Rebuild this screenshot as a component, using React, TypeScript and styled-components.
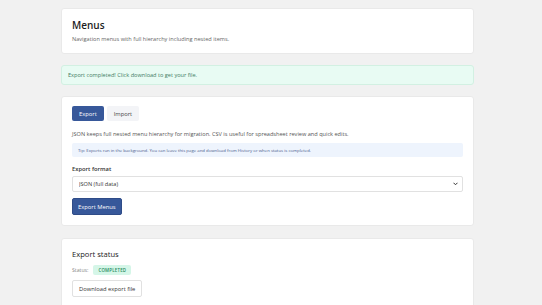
import styled, { createGlobalStyle } from 'styled-components';

const GlobalStyle = createGlobalStyle`
  html, body {
    margin: 0;
    padding: 0;
    background: #f1f1f1;
    font-family: "Open Sans", "Noto Sans", sans-serif;
    color: #222;
  }
`;

const Page = styled.div`
  width: 413px;
  margin: 8px 0 0 61px;
  display: flex;
  flex-direction: column;
  gap: 11px;
`;

const Card = styled.section<{ $extraTop?: number }>`
  background: #fff;
  border: 1px solid #e9e9e9;
  border-radius: 3px;
  padding: 9px 10px 10px;
  margin-top: ${p => p.$extraTop ?? 0}px;
  display: flex;
  flex-direction: column;
`;

const Title = styled.h1`
  margin: 0;
  font-size: 10px;
  font-weight: 600;
  color: #1e1e1e;
  line-height: 14px;
`;

const Subtitle = styled.p`
  margin: 3px 0 0;
  font-size: 5.6px;
  color: #666;
  line-height: 8px;
`;

const Alert = styled.div`
  background: #e8fbf3;
  border: 1px solid #d2f0e2;
  border-radius: 3px;
  padding: 5px 6px;
  font-size: 5.6px;
  line-height: 8px;
  color: #3f7c63;
`;

const Tabs = styled.div`
  display: flex;
  gap: 3px;
`;

const Tab = styled.button<{ $active?: boolean }>`
  font-family: inherit;
  font-size: 5.8px;
  height: 15px;
  padding: 0 7px;
  border-radius: 2px;
  border: none;
  cursor: pointer;
  background: ${p => (p.$active ? '#37589a' : '#f3f4f7')};
  color: ${p => (p.$active ? '#fff' : '#444')};
`;

const Text = styled.p`
  margin: 9px 0 0;
  font-size: 5.6px;
  line-height: 8px;
  color: #555;
`;

const Tip = styled.div`
  margin-top: 5px;
  background: #eef4fd;
  border-radius: 2px;
  padding: 3px 6px;
  font-size: 4.3px;
  line-height: 8px;
  color: #4a5b8c;
`;

const Label = styled.label`
  margin-top: 8px;
  font-size: 5.8px;
  font-weight: 600;
  color: #333;
  line-height: 8px;
`;

const SelectWrap = styled.div`
  position: relative;
  margin-top: 3px;
  display: flex;
`;

const Select = styled.select`
  flex: 1;
  appearance: none;
  height: 16px;
  font-family: inherit;
  font-size: 5.6px;
  color: #333;
  padding: 0 6px;
  border: 1px solid #e1e1e1;
  border-radius: 2px;
  background: #fff;
  outline: none;
`;

const Chevron = styled.svg`
  position: absolute;
  right: 5px;
  top: 6px;
  width: 5px;
  height: 4px;
  pointer-events: none;
`;

const Primary = styled.button`
  margin-top: 6px;
  align-self: flex-start;
  height: 17px;
  padding: 0 5px;
  font-family: inherit;
  font-size: 5.8px;
  color: #fff;
  background: #37589a;
  border: 1px solid #2f4c88;
  border-radius: 2px;
`;

const SectionTitle = styled.h2`
  margin: 0;
  font-size: 7.6px;
  font-weight: 500;
  color: #222;
  line-height: 12px;
`;

const StatusRow = styled.div`
  margin-top: 5px;
  display: flex;
  align-items: center;
  gap: 5px;
  font-size: 5.2px;
  color: #888;
`;

const Badge = styled.span`
  background: #d5f6e8;
  color: #1f8a5c;
  font-size: 4.4px;
  font-weight: 600;
  letter-spacing: 0.2px;
  padding: 2px 5px;
  border-radius: 2px;
`;

const Secondary = styled.button`
  margin-top: 5px;
  align-self: flex-start;
  height: 17px;
  padding: 0 6px;
  font-family: inherit;
  font-size: 5.8px;
  color: #333;
  background: #fff;
  border: 1px solid #e1e1e1;
  border-radius: 2px;
`;

export default function App() {
  return (
    <>
      <GlobalStyle />
      <Page>
        <Card>
          <Title>Menus</Title>
          <Subtitle>Navigation menus with full hierarchy including nested items.</Subtitle>
        </Card>
        <Alert>Export completed! Click download to get your file.</Alert>
        <Card>
          <Tabs>
            <Tab $active>Export</Tab>
            <Tab>Import</Tab>
          </Tabs>
          <Text>JSON keeps full nested menu hierarchy for migration. CSV is useful for spreadsheet review and quick edits.</Text>
          <Tip>Tip: Exports run in the background. You can leave this page and download from History or when status is completed.</Tip>
          <Label>Export format</Label>
          <SelectWrap>
            <Select defaultValue="json">
              <option value="json">JSON (full data)</option>
              <option value="csv">CSV</option>
            </Select>
            <Chevron viewBox="0 0 10 7">
              <path d="M1 1l4 4 4-4" fill="none" stroke="#333" strokeWidth="2" />
            </Chevron>
          </SelectWrap>
          <Primary>Export Menus</Primary>
        </Card>
        <Card $extraTop={1}>
          <SectionTitle>Export status</SectionTitle>
          <StatusRow>
            Status: <Badge>COMPLETED</Badge>
          </StatusRow>
          <Secondary>Download export file</Secondary>
        </Card>
      </Page>
    </>
  );
}
